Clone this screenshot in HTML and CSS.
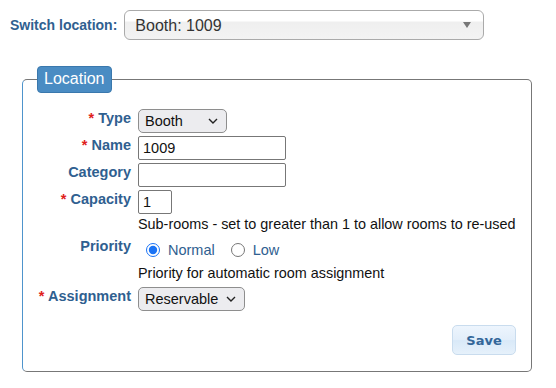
FILE: index.html
```html
<!DOCTYPE html>
<html lang="en">
<head>
    <meta charset="UTF-8">
    <title>Location</title>
    <link rel="stylesheet" href="styles.css">
</head>
<body>
    <div class="switch-bar">
        <label class="switch-label" for="switch">Switch location:</label>
        <div class="switch-select">
            <select id="switch">
                <option>Booth: 1009</option>
            </select>
            <span class="switch-arrow"></span>
        </div>
    </div>

    <fieldset class="location-box">
        <legend>Location</legend>

        <div class="form-grid">
            <label class="field-label"><span class="req">*</span> Type</label>
            <div class="field">
                <div class="select-wrap type-select">
                    <select><option>Booth</option></select>
                    <svg class="chevron" viewBox="0 0 10 6" width="10" height="6"><path d="M1 1l4 4 4-4" fill="none" stroke="#222" stroke-width="1.4"/></svg>
                </div>
            </div>

            <label class="field-label"><span class="req">*</span> Name</label>
            <div class="field"><input type="text" class="text-input" value="1009"></div>

            <label class="field-label">Category</label>
            <div class="field"><input type="text" class="text-input"></div>

            <label class="field-label"><span class="req">*</span> Capacity</label>
            <div class="field">
                <input type="text" class="text-input small" value="1">
                <p class="hint">Sub-rooms - set to greater than 1 to allow rooms to re-used</p>
            </div>

            <label class="field-label priority-label">Priority</label>
            <div class="field">
                <div class="radios">
                    <label class="radio"><input type="radio" name="priority" checked> Normal</label>
                    <label class="radio"><input type="radio" name="priority"> Low</label>
                </div>
                <p class="hint last">Priority for automatic room assignment</p>
            </div>

            <label class="field-label"><span class="req">*</span> Assignment</label>
            <div class="field">
                <div class="select-wrap assign-select">
                    <select><option>Reservable</option></select>
                    <svg class="chevron" viewBox="0 0 10 6" width="10" height="6"><path d="M1 1l4 4 4-4" fill="none" stroke="#222" stroke-width="1.4"/></svg>
                </div>
            </div>
        </div>

        <div class="actions">
            <button class="save">Save</button>
        </div>
    </fieldset>
</body>
</html>
```

FILE: styles.css
```css
* {
    box-sizing: border-box;
}

body {
    margin: 0;
    font-family: 'Liberation Sans', Arial, sans-serif;
    font-size: 14px;
    color: #111;
    background: #fff;
}

/* Switch location bar */
.switch-bar {
    display: flex;
    align-items: center;
    padding: 10px 0 0 10px;
}

.switch-label {
    font-weight: bold;
    font-size: 14px;
    color: #2f6090;
    margin-right: 7px;
}

.switch-select {
    position: relative;
    width: 360px;
    height: 30px;
}

.switch-select select {
    appearance: none;
    width: 100%;
    height: 100%;
    border: 1px solid #aaa;
    border-radius: 6px;
    padding: 0 0 0 10px;
    font-family: inherit;
    font-size: 16px;
    color: #333;
    background: linear-gradient(#fff 0%, #fff 35%, #efefef 40%, #f3f3f3 100%);
}

.switch-arrow {
    position: absolute;
    right: 13px;
    top: 12px;
    border-left: 4px solid transparent;
    border-right: 4px solid transparent;
    border-top: 6px solid #777;
    pointer-events: none;
}

/* Location fieldset */
.location-box {
    margin: 26px 0 0 22px;
    width: 510px;
    height: 306px;
    padding: 0;
    border: 1px solid #777;
    border-left-color: #4e94cc;
    border-radius: 5px;
}

.location-box legend {
    margin-left: 14px;
    padding: 3px 6px 4px;
    background: #4a8cc3;
    border: 1px solid #3a78ad;
    border-radius: 4px;
    color: #fff;
    font-size: 16px;
}

.form-grid {
    display: grid;
    grid-template-columns: 108px 1fr;
    column-gap: 7px;
    row-gap: 3px;
    margin-top: 16px;
}

.field-label {
    text-align: right;
    font-weight: bold;
    font-size: 14.5px;
    color: #2f6090;
    padding-top: 1px;
}

.req {
    color: #e0201c;
}

.field {
    display: flex;
    flex-direction: column;
    align-items: flex-start;
}

.select-wrap {
    position: relative;
}

.select-wrap select {
    appearance: none;
    height: 24px;
    border: 1px solid #8e8e8e;
    border-radius: 5px;
    background: #ececef;
    font-family: inherit;
    font-size: 14.5px;
    color: #111;
    padding: 0 0 0 6px;
}

.type-select select {
    width: 89px;
}

.assign-select select {
    width: 107px;
}

.chevron {
    position: absolute;
    right: 9px;
    top: 9px;
    pointer-events: none;
}

.text-input {
    width: 148px;
    height: 24px;
    border: 1px solid #777;
    border-radius: 2px;
    padding: 0 4px;
    font-family: inherit;
    font-size: 14.5px;
    color: #111;
    margin: 0;
}

.text-input.small {
    width: 34px;
}

.hint {
    margin: 2px 0 0;
    font-size: 14.4px;
    line-height: 16px;
    color: #111;
}

.hint.last {
    margin: 3px 0 3px;
}

.priority-label {
    padding-top: 3px;
}

.radios {
    display: flex;
    gap: 8px;
    padding-top: 3px;
    height: 27px;
}

.radio {
    display: flex;
    align-items: center;
    color: #2f6090;
    font-size: 14.5px;
}

.radio input {
    width: 14px;
    height: 14px;
    margin: 0 8px;
    accent-color: #1a73f5;
}

.actions {
    display: flex;
    justify-content: flex-end;
    padding: 14px 15px 0 0;
}

.save {
    width: 64px;
    height: 30px;
    border: 1px solid #c9dcee;
    border-radius: 5px;
    background: linear-gradient(#edf5fd, #e2eefa 50%, #d9e9f8 52%, #e6f1fb);
    color: #336699;
    font-family: 'DejaVu Sans', Verdana, sans-serif;
    font-weight: bold;
    font-size: 13px;
}
```
